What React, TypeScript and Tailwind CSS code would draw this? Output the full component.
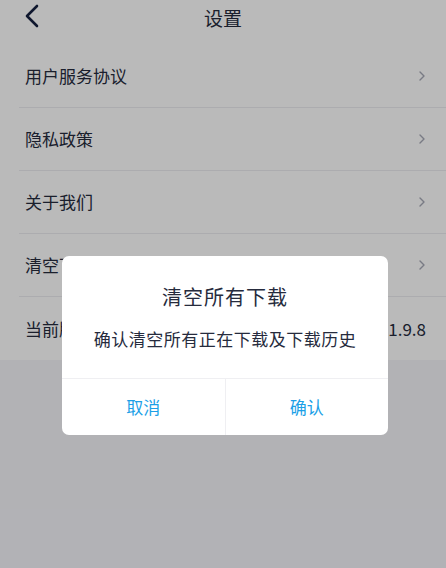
import React from 'react';

const rows = [
  { label: '用户服务协议', arrow: true },
  { label: '隐私政策', arrow: true },
  { label: '关于我们', arrow: true },
  { label: '清空下载', arrow: true },
  { label: '当前版本', value: '1.9.8' },
];

function Chevron() {
  return (
    <svg width="8" height="12" viewBox="0 0 8 12" fill="none">
      <path d="M2 2l4 4-4 4" stroke="#a6a9b6" strokeWidth="1.4" strokeLinecap="round" strokeLinejoin="round" />
    </svg>
  );
}

export default function App() {
  return (
    <div
      className="relative w-[446px] h-[568px] overflow-hidden bg-[#f4f4f9]"
      style={{ fontFamily: '"Noto Sans CJK SC", "Noto Sans", sans-serif' }}
    >
      <div className="bg-white">
        <div className="relative h-[45px] flex justify-center">
          <svg className="absolute left-[24px] top-[4px]" width="16" height="24" viewBox="0 0 16 24" fill="none">
            <path d="M13 2L3 12l10 10" stroke="#15203f" strokeWidth="2.6" strokeLinecap="round" strokeLinejoin="round" />
          </svg>
          <div className="text-[19px] leading-none pt-[8px] text-[#262b3d]">设置</div>
        </div>
        <div className="pl-[19px]">
          {rows.map((r, i) => (
            <div
              key={r.label}
              className={`h-[63px] flex items-center justify-between pl-[6px] pr-[20px] ${
                i < rows.length - 1 ? 'border-b border-[#ececf0]' : ''
              }`}
            >
              <span className="text-[17px] text-[#262b3d]">{r.label}</span>
              {r.arrow ? <Chevron /> : <span className="text-[17px] text-[#262b3d]">{r.value}</span>}
            </div>
          ))}
        </div>
      </div>

      <div className="absolute inset-0 bg-black/[0.27]" />

      <div className="absolute left-[62px] top-[256px] w-[326px] rounded-[7px] bg-white overflow-hidden">
        <div className="h-[122px] flex flex-col items-center">
          <div className="mt-[28px] text-[20px] leading-[26px] tracking-[1px] text-[#262b3d]">清空所有下载</div>
          <div className="mt-[18px] text-[17px] leading-[22px] tracking-[0.5px] text-[#262b3d]">确认清空所有正在下载及下载历史</div>
        </div>
        <div className="flex h-[57px] border-t border-[#efeff2]">
          <button className="flex-1 flex items-center justify-center text-[17px] text-[#1b9fe7]">取消</button>
          <div className="w-px bg-[#efeff2]" />
          <button className="flex-1 flex items-center justify-center text-[17px] text-[#1b9fe7]">确认</button>
        </div>
      </div>
    </div>
  );
}
